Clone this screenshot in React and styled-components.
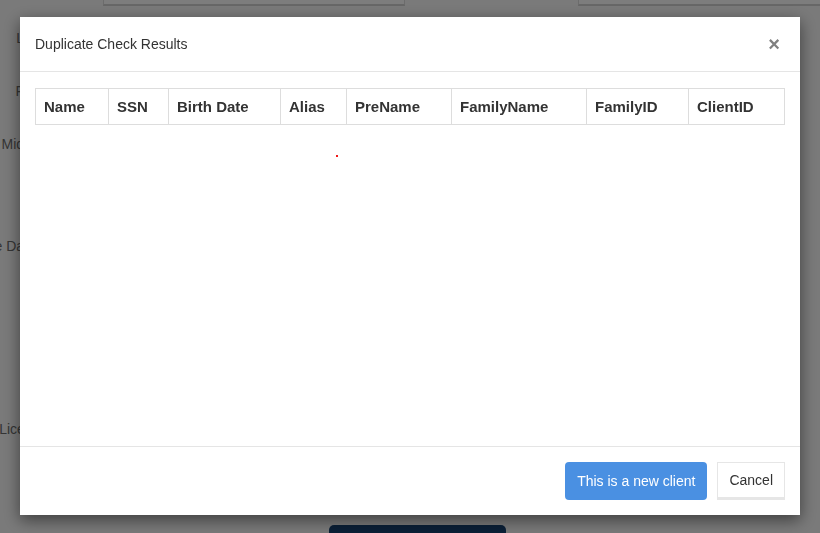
import React from 'react'
import styled, { createGlobalStyle } from 'styled-components'

const Global = createGlobalStyle`
  html, body { margin: 0; padding: 0; }
  body {
    font-family: "Liberation Sans", Arial, sans-serif;
    font-size: 14px;
    color: #333;
    overflow: hidden;
  }
`

// page behind the dialog (dimmed by the backdrop)
const Page = styled.div`
  height: 100vh;
  background: #f4f4f4;
  overflow: hidden;
`

const Form = styled.div`
  display: flex;
  flex-direction: column;
  margin-top: -28px;
`

const Row = styled.div`
  display: grid;
  grid-template-columns: 103px 302px 173px 260px;
  align-items: center;
  height: 34px;
  margin-top: ${p => p.$mt || 0}px;
`

const Label = styled.div`
  display: flex;
  justify-content: flex-end;
  white-space: nowrap;
  padding-right: 19px;
  color: #6a6a6a;
  font-size: 14px;
`

const Field = styled.div`
  height: 34px;
  box-sizing: border-box;
  background: #fbfbfb;
  border: 1px solid #d8d8d8;
  border-bottom: 2px solid #cfcfcf;
`

const SubmitBtn = styled.div`
  width: 177px;
  height: 36px;
  margin: 79px 0 0 329px;
  border-radius: 5px;
  background: #16406f;
`

const Backdrop = styled.div`
  position: fixed;
  inset: 0;
  background: rgba(0, 0, 0, 0.5);
  padding: 17px 20px;
`

const Modal = styled.div`
  width: 780px;
  height: 498px;
  background: #fff;
  display: flex;
  flex-direction: column;
  box-shadow: 0 5px 15px rgba(0, 0, 0, 0.5);
`

const Header = styled.div`
  display: flex;
  align-items: center;
  justify-content: space-between;
  padding: 15px 20px 15px 15px;
  border-bottom: 1px solid #e5e5e5;
`

const Title = styled.div`
  font-size: 14px;
  line-height: 24px;
  color: #333;
`

const Close = styled.span`
  font-size: 20px;
  font-weight: 700;
  line-height: 1;
  color: #808080;
  cursor: pointer;
`

const Body = styled.div`
  flex: 1;
  padding: 16px 16px 15px 15px;
`

const Table = styled.table`
  width: 100%;
  table-layout: fixed;
  border-collapse: collapse;
  border: 1px solid #ddd;
`

const Th = styled.th`
  width: ${p => p.$w}px;
  box-sizing: border-box;
  padding: 8px;
  border: 1px solid #ddd;
  text-align: left;
  font-size: 15px;
  line-height: 19px;
  font-weight: 700;
  color: #333;
  white-space: nowrap;
`

const Dot = styled.div`
  width: 2px;
  height: 2px;
  margin: 30px 0 0 301px;
  background: #f01818;
`

const Footer = styled.div`
  display: flex;
  justify-content: flex-end;
  gap: 10px;
  padding: 15px;
  border-top: 1px solid #e5e5e5;
`

const Button = styled.button`
  font-family: inherit;
  font-size: 14px;
  line-height: 20px;
  height: 38px;
  box-sizing: border-box;
  cursor: pointer;
  padding: ${p => (p.$primary ? '0 12px' : '0 11px')};
  background: ${p => (p.$primary ? '#4a90e2' : '#fff')};
  color: ${p => (p.$primary ? '#fff' : '#333')};
  border: ${p => (p.$primary ? '0' : '1px solid #e6e6e6')};
  border-bottom-width: ${p => (p.$primary ? '0' : '3px')};
  border-radius: ${p => (p.$primary ? '4px' : '0')};
`

const columns = [
  { name: 'Name', w: 73 },
  { name: 'SSN', w: 60 },
  { name: 'Birth Date', w: 112 },
  { name: 'Alias', w: 66 },
  { name: 'PreName', w: 105 },
  { name: 'FamilyName', w: 135 },
  { name: 'FamilyID', w: 102 },
  { name: 'ClientID', w: 96 },
]

const rows = [
  { label: '', mt: 0, right: true },
  { label: 'Last Name', mt: 15 },
  { label: 'First Name', mt: 19 },
  { label: 'Middle Name', mt: 19 },
  { label: 'Suffix', mt: 19 },
  { label: 'Alternate Date of Birth', mt: 15 },
  { label: 'SSN', mt: 19 },
  { label: 'Gender', mt: 19 },
  { label: 'License State', mt: 43 },
]

export default function App() {
  return (
    <>
      <Global />
      <Page>
        <Form>
          {rows.map((r, i) => (
            <Row key={i} $mt={r.mt}>
              <Label><span>{r.label}</span></Label>
              <Field />
              <Label />
              {r.right && <Field />}
            </Row>
          ))}
          <SubmitBtn />
        </Form>
      </Page>
      <Backdrop>
        <Modal>
          <Header>
            <Title>Duplicate Check Results</Title>
            <Close>×</Close>
          </Header>
          <Body>
            <Table>
              <thead>
                <tr>
                  {columns.map(c => (
                    <Th key={c.name} $w={c.w}>{c.name}</Th>
                  ))}
                </tr>
              </thead>
              <tbody />
            </Table>
            <Dot />
          </Body>
          <Footer>
            <Button $primary>This is a new client</Button>
            <Button>Cancel</Button>
          </Footer>
        </Modal>
      </Backdrop>
    </>
  )
}
